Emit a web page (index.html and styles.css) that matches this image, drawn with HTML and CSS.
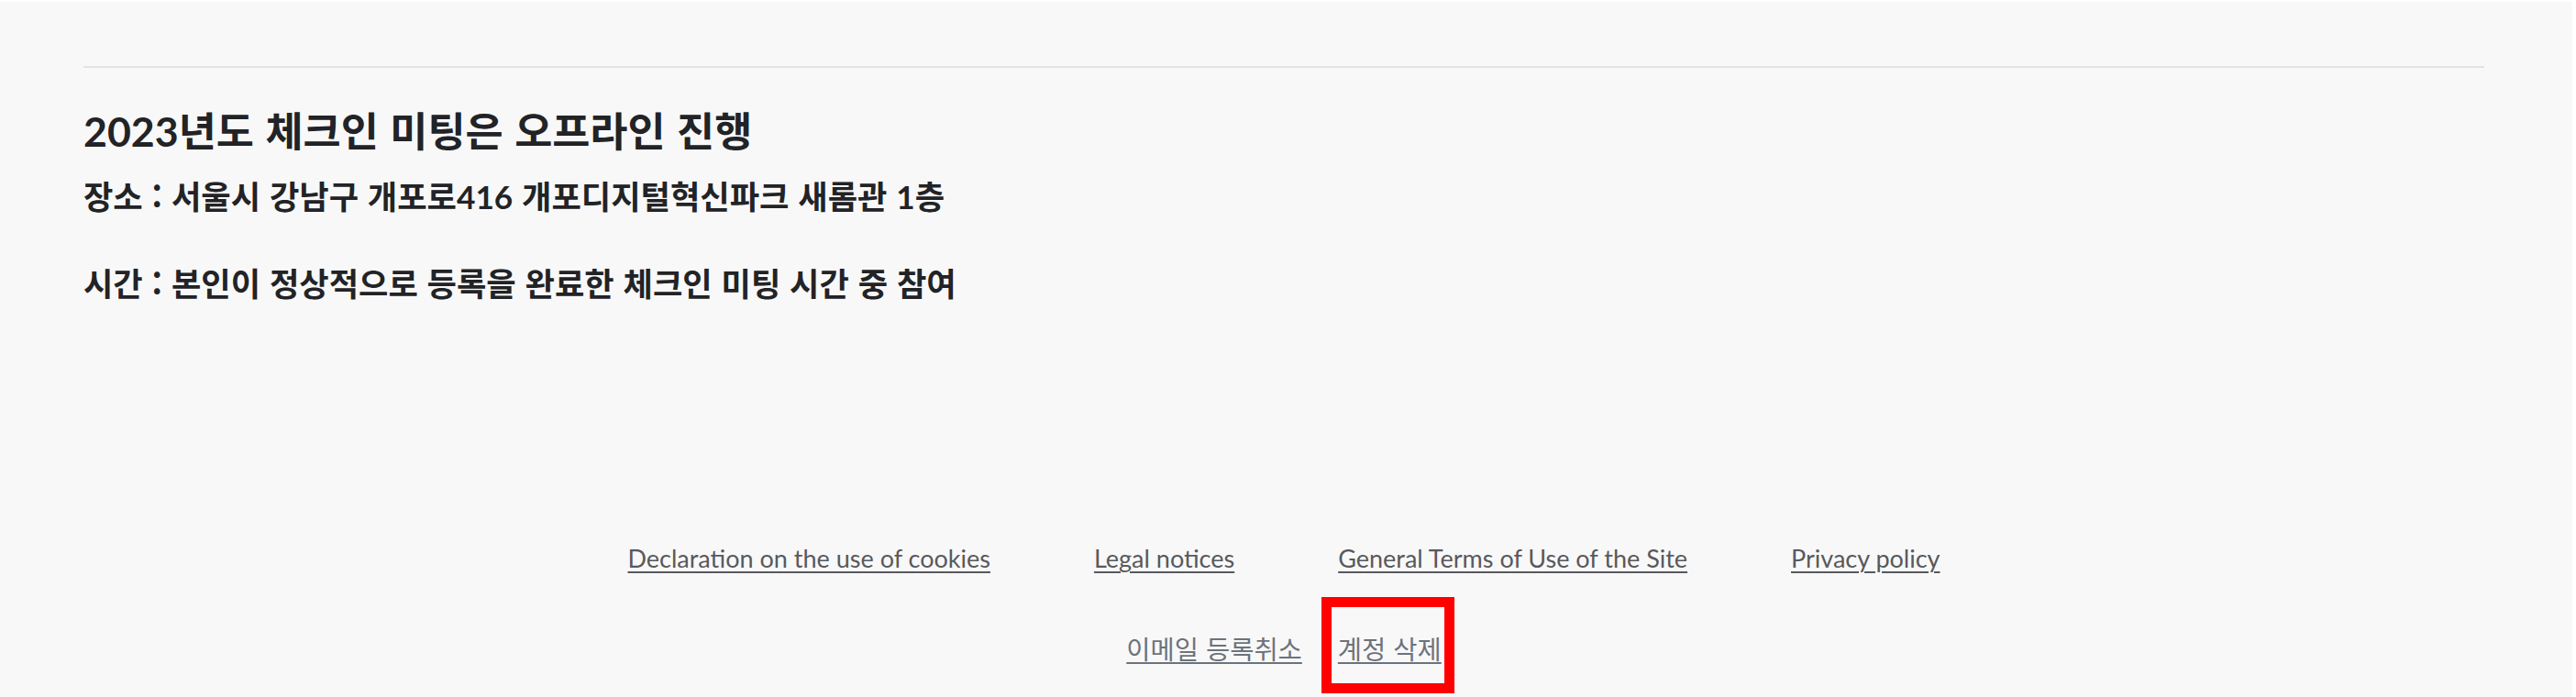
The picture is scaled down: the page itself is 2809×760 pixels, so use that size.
FILE: index.html
```html
<!DOCTYPE html>
<html lang="ko">
<head>
<meta charset="utf-8">
<title>체크인 미팅</title>
<link rel="stylesheet" href="styles.css">
</head>
<body>
<div class="page">
  <main class="content">
    <hr class="divider">
    <h2 class="title"><span class="num">2023</span>년도 체크인 미팅은 오프라인 진행</h2>
    <p class="info">장소 : 서울시 강남구 개포로<span class="num">416</span> 개포디지털혁신파크 새롬관 <span class="num">1</span>층</p>
    <p class="info info-time">시간 : 본인이 정상적으로 등록을 완료한 체크인 미팅 시간 중 참여</p>
  </main>
  <footer class="footer">
    <nav class="legal">
      <a href="#">Declaration on the use of cookies</a>
      <a href="#">Legal notices</a>
      <a href="#">General Terms of Use of the Site</a>
      <a href="#">Privacy policy</a>
    </nav>
    <nav class="account">
      <a href="#">이메일 등록취소</a>
      <a href="#" class="highlight">계정 삭제</a>
    </nav>
  </footer>
</div>
</body>
</html>
```

FILE: styles.css
```css
html, body {
  margin: 0;
  padding: 0;
  background: #ffffff;
}

.page {
  margin-top: 2px;
  width: 2805px;
  height: 758px;
  background: #f8f8f8;
  overflow: hidden;
  font-family: "Noto Sans CJK KR", sans-serif;
}

.content {
  width: 2800px;
  box-sizing: border-box;
  padding: 70px 91px 0 91px;
  color: #222326;
}

.divider {
  margin: 0;
  border: 0;
  height: 2px;
  background: #e3e3e3;
}

.title {
  margin: 42px 0 0 0;
  font-size: 44.7px;
  line-height: 50px;
  font-weight: 600;
}

.num {
  font-family: Lato, "Noto Sans CJK KR", sans-serif;
  font-weight: 700;
}

.info {
  margin: 25px 0 0 0;
  font-size: 35.2px;
  line-height: 40px;
  font-weight: 600;
}

.info-time {
  margin-top: 54px;
}

.footer {
  width: 2800px;
  margin-top: 261px;
  display: flex;
  flex-direction: column;
  align-items: center;
  gap: 58px;
}

.legal {
  display: flex;
  gap: 113px;
}

.legal a {
  font-family: Lato, sans-serif;
  font-size: 27px;
  line-height: 40px;
  color: #58595d;
  text-decoration: underline;
  text-decoration-thickness: 2px;
  text-underline-offset: 4px;
}

.account {
  display: flex;
  gap: 39px;
}

.account a {
  position: relative;
  font-size: 28.5px;
  line-height: 40px;
  color: #6c737c;
  text-decoration: underline;
  text-decoration-thickness: 2px;
  text-underline-offset: 3px;
}

.account a.highlight::after {
  content: "";
  position: absolute;
  left: -18px;
  right: -14px;
  top: -36px;
  bottom: -29px;
  border: 11px solid #ff0000;
  pointer-events: none;
}
```
